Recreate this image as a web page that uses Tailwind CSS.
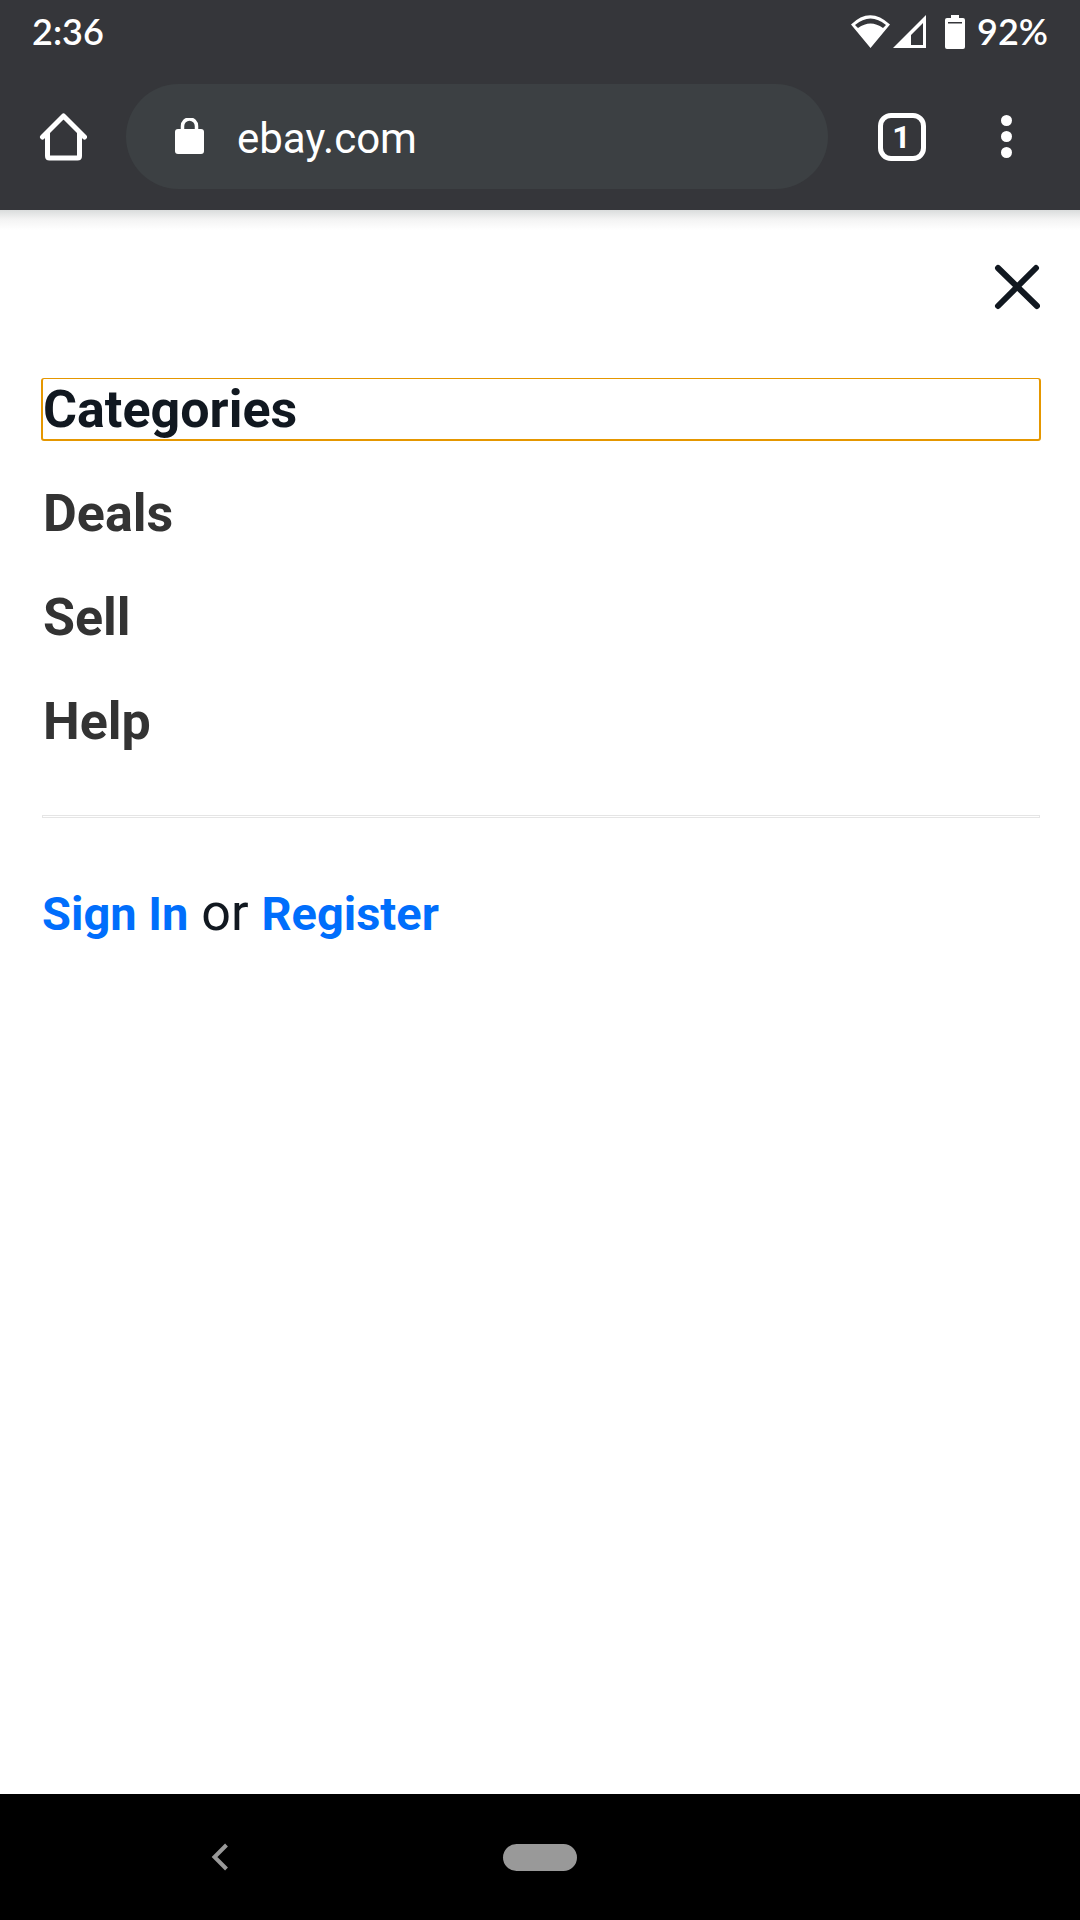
<!DOCTYPE html>
<html lang="en">
<head>
<meta charset="utf-8">
<meta name="viewport" content="width=device-width, initial-scale=1">
<title>ebay.com</title>
<script src="https://cdn.jsdelivr.net/npm/@tailwindcss/browser@4"></script>
</head>
<body class="flex min-h-screen flex-col bg-white font-['Roboto',sans-serif] text-[#111820]">
<header class="bg-[#35363a] text-white">
  <div class="flex h-[63px] items-center justify-between px-8 font-['Lato',sans-serif] text-[36px] leading-[63px] font-semibold">
    <time>2:36</time>
    <div class="flex items-center">
      <svg class="h-[34px] w-[116px]" viewBox="0 0 116 34" fill="none" role="img" aria-label="Wi-Fi, mobile signal and battery">
        <path fill="#fff" fill-rule="evenodd" d="M0 9.500Q19-9 39 9.500L19.500 33ZM4 10L7 13Q19.500 4 32 13L35 10Q19.500-3 4 10Z"/>
        <path fill="#fff" fill-rule="evenodd" d="M42 33L75 0V33ZM60 30H72V8L60 20Z"/>
        <path fill="#fff" fill-rule="evenodd" d="M100 0H108V3H112Q114 3 114 5V32Q114 34 112 34H96Q94 34 94 32V5Q94 3 96 3H100ZM97 7V8.500H111V7Z"/>
      </svg>
      <span class="ml-2.5">92%</span>
    </div>
  </div>
  <div class="flex h-[147px] items-center pr-[21px]">
    <button type="button" aria-label="Home" class="flex h-[105px] w-[126px] items-center justify-center">
      <svg class="size-12" viewBox="0 0 48 48" fill="none" stroke="#fff" stroke-width="5" stroke-linejoin="round" stroke-linecap="round"><path d="M3.500 24L24.500 3L45.500 24M8.500 20V43Q8.500 45 10.500 45H38.500Q40.500 45 40.500 43V20"/></svg>
    </button>
    <label class="flex h-[105px] min-w-0 flex-1 items-center rounded-full bg-[#3c4043] pl-[49px]">
      <svg class="h-[38px] w-[29px] shrink-0" viewBox="0 0 29 38" fill="none"><rect y="11" width="29" height="25" rx="3" fill="#fff"/><path d="M7.500 13V8A7 7 0 0 1 21.500 8V13" stroke="#fff" stroke-width="3.500"/></svg>
      <input type="text" aria-label="Address" value="ebay.com" class="ml-[33px] h-[57px] min-w-0 flex-1 bg-transparent pt-1 text-[42px] leading-[53px] outline-none">
    </label>
    <button type="button" aria-label="Open tabs" class="ml-[21px] flex h-[105px] w-[105px] items-center justify-center">
      <span class="flex size-12 items-center justify-center rounded-[13px] border-5 border-white text-[32px] leading-[38px] font-bold">1</span>
    </button>
    <button type="button" aria-label="More options" class="flex h-[105px] w-[105px] flex-col items-center justify-center gap-[5px]">
      <span class="size-[11px] rounded-full bg-white"></span>
      <span class="size-[11px] rounded-full bg-white"></span>
      <span class="size-[11px] rounded-full bg-white"></span>
    </button>
  </div>
</header>
<div class="h-5 bg-linear-to-b from-[#dadcdc] via-[#f3f3f3] via-45% to-white"></div>
<main class="flex-1 pr-10 pl-[42px]">
  <div class="flex justify-end pt-[34px]">
    <button type="button" aria-label="Close menu" class="size-[46px]">
      <svg class="size-[46px]" viewBox="0 0 46 46" fill="none" stroke="#111820" stroke-width="6" stroke-linecap="round"><path d="M4 4L43 42M42 4L4 42"/></svg>
    </button>
  </div>
  <nav aria-label="Menu" class="mt-[68px]">
    <ul class="flex flex-col gap-[41px] text-[52px] leading-[62px] font-bold text-[#333]">
      <li><a href="#categories" class="-mx-px block h-[63px] rounded-[3px] border-2 border-t border-[#e59700] text-[#111820]">Categories</a></li>
      <li><a href="#deals" class="-mx-px block h-[63px] border-2 border-t border-transparent">Deals</a></li>
      <li><a href="#sell" class="-mx-px block h-[63px] border-2 border-t border-transparent">Sell</a></li>
      <li><a href="#help" class="-mx-px block h-[63px] border-2 border-t border-transparent">Help</a></li>
    </ul>
  </nav>
  <hr class="mt-[62px] h-[3px] border border-[#e5e5e5]">
  <p class="mt-[67px] text-[52px] leading-[56px]"><a href="#signin" class="text-[47px] font-bold text-[#006efc]">Sign In</a> or <a href="#register" class="text-[47px] font-bold text-[#006efc]">Register</a></p>
</main>
<footer class="grid h-[126px] grid-cols-[1fr_auto_1fr] items-center bg-black">
  <button type="button" aria-label="Back" class="ml-44 flex h-[88px] w-[88px] items-center justify-center">
    <svg class="h-7 w-[18px]" viewBox="0 0 18 28" fill="none" stroke="#999" stroke-width="4"><path d="M15.500 2L3.500 14L15.500 26"/></svg>
  </button>
  <button type="button" aria-label="Home screen" class="h-[27px] w-[74px] rounded-full bg-[#999]"></button>
</footer>
</body>
</html>
